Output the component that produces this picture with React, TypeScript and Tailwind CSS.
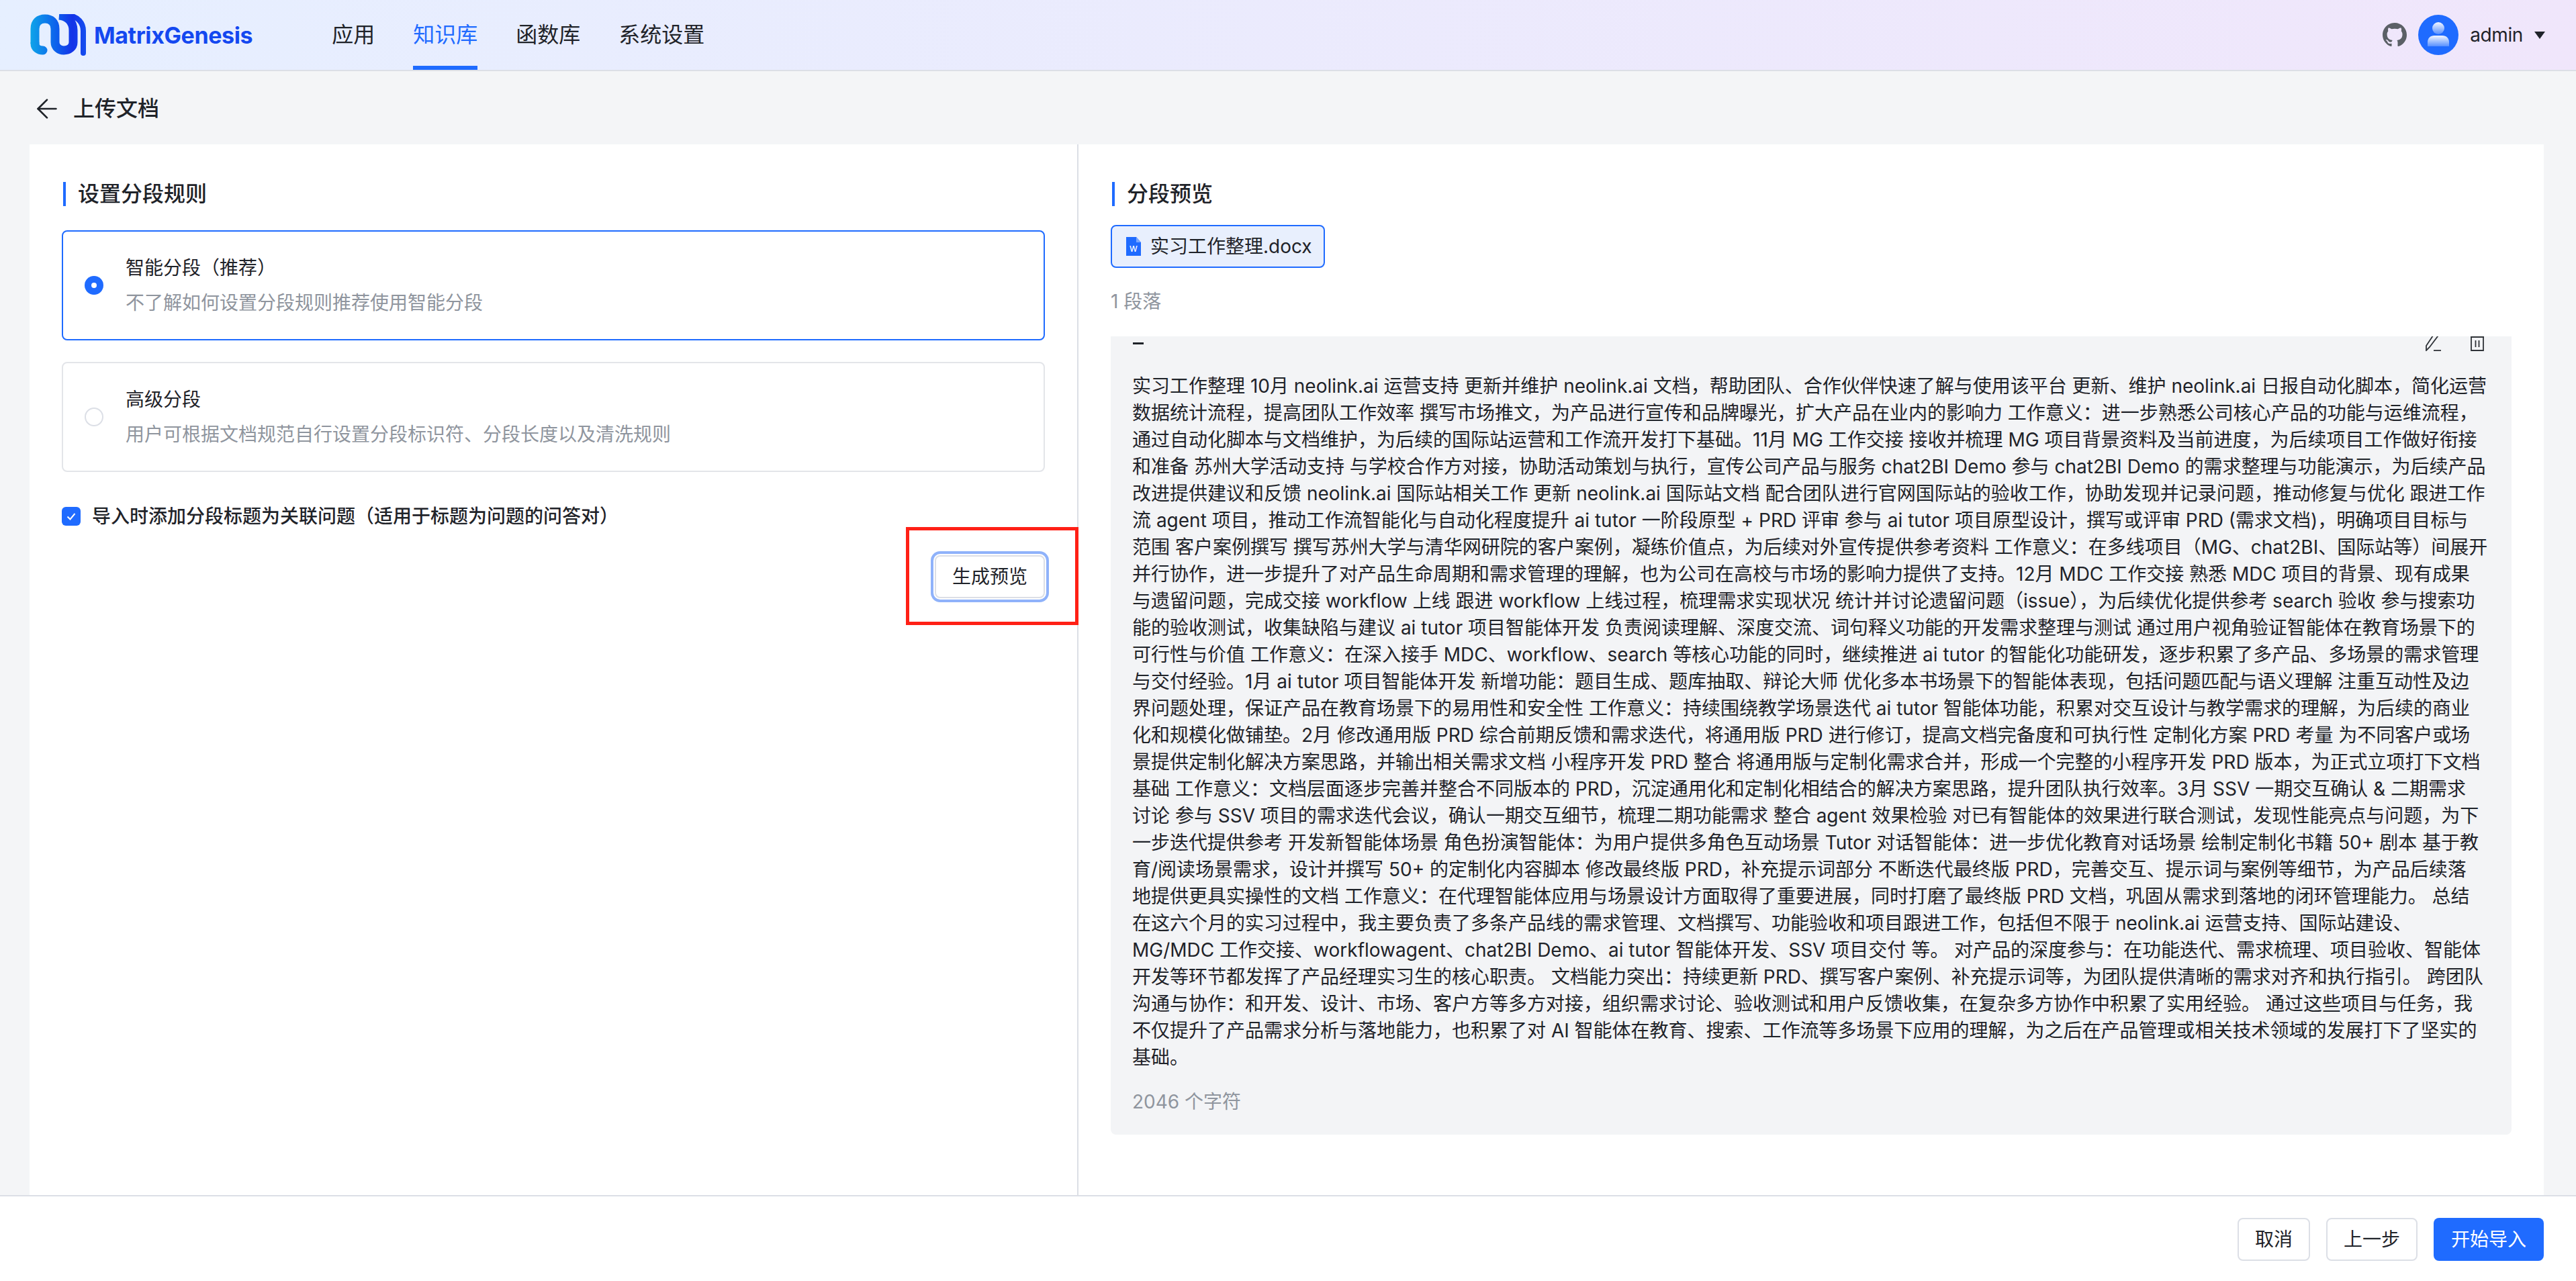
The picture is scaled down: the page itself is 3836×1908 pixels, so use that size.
import React from 'react';
import { ArrowLeft } from 'lucide-react';

const FONT = "font-['Inter','Noto_Sans_CJK_SC',sans-serif]";

const LINES = [
  '实习工作整理 10月 neolink.ai 运营支持 更新并维护 neolink.ai 文档，帮助团队、合作伙伴快速了解与使用该平台 更新、维护 neolink.ai 日报自动化脚本，简化运营',
  '数据统计流程，提高团队工作效率 撰写市场推文，为产品进行宣传和品牌曝光，扩大产品在业内的影响力 工作意义：进一步熟悉公司核心产品的功能与运维流程，',
  '通过自动化脚本与文档维护，为后续的国际站运营和工作流开发打下基础。11月 MG 工作交接 接收并梳理 MG 项目背景资料及当前进度，为后续项目工作做好衔接',
  '和准备 苏州大学活动支持 与学校合作方对接，协助活动策划与执行，宣传公司产品与服务 chat2BI Demo 参与 chat2BI Demo 的需求整理与功能演示，为后续产品',
  '改进提供建议和反馈 neolink.ai 国际站相关工作 更新 neolink.ai 国际站文档 配合团队进行官网国际站的验收工作，协助发现并记录问题，推动修复与优化 跟进工作',
  '流 agent 项目，推动工作流智能化与自动化程度提升 ai tutor 一阶段原型 + PRD 评审 参与 ai tutor 项目原型设计，撰写或评审 PRD (需求文档)，明确项目目标与',
  '范围 客户案例撰写 撰写苏州大学与清华网研院的客户案例，凝练价值点，为后续对外宣传提供参考资料 工作意义：在多线项目（MG、chat2BI、国际站等）间展开',
  '并行协作，进一步提升了对产品生命周期和需求管理的理解，也为公司在高校与市场的影响力提供了支持。12月 MDC 工作交接 熟悉 MDC 项目的背景、现有成果',
  '与遗留问题，完成交接 workflow 上线 跟进 workflow 上线过程，梳理需求实现状况 统计并讨论遗留问题（issue），为后续优化提供参考 search 验收 参与搜索功',
  '能的验收测试，收集缺陷与建议 ai tutor 项目智能体开发 负责阅读理解、深度交流、词句释义功能的开发需求整理与测试 通过用户视角验证智能体在教育场景下的',
  '可行性与价值 工作意义：在深入接手 MDC、workflow、search 等核心功能的同时，继续推进 ai tutor 的智能化功能研发，逐步积累了多产品、多场景的需求管理',
  '与交付经验。1月 ai tutor 项目智能体开发 新增功能：题目生成、题库抽取、辩论大师 优化多本书场景下的智能体表现，包括问题匹配与语义理解 注重互动性及边',
  '界问题处理，保证产品在教育场景下的易用性和安全性 工作意义：持续围绕教学场景迭代 ai tutor 智能体功能，积累对交互设计与教学需求的理解，为后续的商业',
  '化和规模化做铺垫。2月 修改通用版 PRD 综合前期反馈和需求迭代，将通用版 PRD 进行修订，提高文档完备度和可执行性 定制化方案 PRD 考量 为不同客户或场',
  '景提供定制化解决方案思路，并输出相关需求文档 小程序开发 PRD 整合 将通用版与定制化需求合并，形成一个完整的小程序开发 PRD 版本，为正式立项打下文档',
  '基础 工作意义：文档层面逐步完善并整合不同版本的 PRD，沉淀通用化和定制化相结合的解决方案思路，提升团队执行效率。3月 SSV 一期交互确认 & 二期需求',
  '讨论 参与 SSV 项目的需求迭代会议，确认一期交互细节，梳理二期功能需求 整合 agent 效果检验 对已有智能体的效果进行联合测试，发现性能亮点与问题，为下',
  '一步迭代提供参考 开发新智能体场景 角色扮演智能体：为用户提供多角色互动场景 Tutor 对话智能体：进一步优化教育对话场景 绘制定制化书籍 50+ 剧本 基于教',
  '育/阅读场景需求，设计并撰写 50+ 的定制化内容脚本 修改最终版 PRD，补充提示词部分 不断迭代最终版 PRD，完善交互、提示词与案例等细节，为产品后续落',
  '地提供更具实操性的文档 工作意义：在代理智能体应用与场景设计方面取得了重要进展，同时打磨了最终版 PRD 文档，巩固从需求到落地的闭环管理能力。 总结',
  '在这六个月的实习过程中，我主要负责了多条产品线的需求管理、文档撰写、功能验收和项目跟进工作，包括但不限于 neolink.ai 运营支持、国际站建设、',
  'MG/MDC 工作交接、workflowagent、chat2BI Demo、ai tutor 智能体开发、SSV 项目交付 等。 对产品的深度参与：在功能迭代、需求梳理、项目验收、智能体',
  '开发等环节都发挥了产品经理实习生的核心职责。 文档能力突出：持续更新 PRD、撰写客户案例、补充提示词等，为团队提供清晰的需求对齐和执行指引。 跨团队',
  '沟通与协作：和开发、设计、市场、客户方等多方对接，组织需求讨论、验收测试和用户反馈收集，在复杂多方协作中积累了实用经验。 通过这些项目与任务，我',
  '不仅提升了产品需求分析与落地能力，也积累了对 AI 智能体在教育、搜索、工作流等多场景下应用的理解，为之后在产品管理或相关技术领域的发展打下了坚实的',
  '基础。',
];

const Logo = () => (
  <svg width="84" height="63" viewBox="0 0 84 63" fill="none">
    <defs>
      <linearGradient id="lg" x1="0" y1="0" x2="84" y2="0" gradientUnits="userSpaceOnUse">
        <stop offset="0" stopColor="#0ea5e9" />
        <stop offset="0.5" stopColor="#0d5bec" />
        <stop offset="0.75" stopColor="#1433e8" />
        <stop offset="1" stopColor="#1450f0" />
      </linearGradient>
    </defs>
    {/* left U closes under the first arch */}
    <path d="M7 44 C7 50 12 54 19 54" stroke="url(#lg)" strokeWidth="13" strokeLinecap="round" />
    {/* main ribbon */}
    <path
      d="M7 44 V22 C7 12 13 7 22 7 C31 7 37 12 37 22 V42 C37 49 43 54 50 54 C58 54 64 49 64 42 V24 C64 12 56 3 43 2"
      stroke="url(#lg)"
      strokeWidth="13"
    />
    {/* outer tail */}
    <path d="M79 58 V25 C79 13 71 4 58 2" stroke="url(#lg)" strokeWidth="8" strokeLinecap="round" />
  </svg>
);

const WordIcon = () => (
  <svg width="22" height="28" viewBox="0 0 22 28">
    <path d="M0 0 H15 L22 8 V28 H0 Z" fill="#1f6bff" />
    <path d="M15 0 L22 8 H15 Z" fill="#7aa7ff" />
    <text x="11" y="22" fontSize="15" fill="#fff" textAnchor="middle" fontFamily="Inter, sans-serif">
      w
    </text>
  </svg>
);

const UserAvatar = () => (
  <svg width="60" height="60" viewBox="0 0 60 60">
    <defs>
      <linearGradient id="ua" x1="0" y1="0" x2="0" y2="1">
        <stop offset="0" stopColor="#ffffff" stopOpacity="0.95" />
        <stop offset="1" stopColor="#ffffff" stopOpacity="0.25" />
      </linearGradient>
    </defs>
    <circle cx="30" cy="30" r="30" fill="#1f6bff" />
    <circle cx="30" cy="20" r="9" fill="url(#ua)" />
    <path d="M14 47 V41 C14 35 18 31 24 31 H36 C42 31 46 35 46 41 V47 Z" fill="url(#ua)" />
  </svg>
);

const GitHubIcon = () => (
  <svg width="36" height="36" viewBox="0 0 16 16" fill="#5b6066">
    <path d="M8 0C3.58 0 0 3.58 0 8c0 3.54 2.29 6.53 5.47 7.59.4.07.55-.17.55-.38 0-.19-.01-.82-.01-1.49-2.01.37-2.53-.49-2.69-.94-.09-.23-.48-.94-.82-1.13-.28-.15-.68-.52-.01-.53.63-.01 1.08.58 1.23.82.72 1.21 1.87.87 2.33.66.07-.52.28-.87.51-1.07-1.78-.2-3.64-.89-3.64-3.95 0-.87.31-1.59.82-2.15-.08-.2-.36-1.02.08-2.12 0 0 .67-.21 2.2.82.64-.18 1.32-.27 2-.27s1.36.09 2 .27c1.53-1.04 2.2-.82 2.2-.82.44 1.1.16 1.92.08 2.12.51.56.82 1.27.82 2.15 0 3.07-1.87 3.75-3.65 3.95.29.25.54.73.54 1.48 0 1.07-.01 1.93-.01 2.2 0 .21.15.46.55.38A8.01 8.01 0 0 0 16 8c0-4.42-3.58-8-8-8z" />
  </svg>
);

const SectionTitle = ({ children }: { children: React.ReactNode }) => (
  <div className="ml-[2px] flex h-9 items-center border-l-4 border-[#1f6bff] pl-[18px] text-[32px] leading-9 font-medium text-[#1f2329]">
    {children}
  </div>
);

const RuleCard = ({ active, title, desc }: { active?: boolean; title: string; desc: string }) => (
  <div
    className={`flex h-[164px] items-center rounded-lg border-2 pl-[32px] ${
      active ? 'border-[#1f6bff]' : 'border-[#e3e5e9]'
    }`}
  >
    {active ? (
      <span className="flex h-7 w-7 items-center justify-center rounded-full bg-[#1f6bff]">
        <span className="h-2 w-2 rounded-full bg-white" />
      </span>
    ) : (
      <span className="h-7 w-7 rounded-full border-2 border-[#dcdfe6]" />
    )}
    <div className="ml-[33px]">
      <div className="text-[28px] leading-10 text-[#1f2329]">{title}</div>
      <div className="mt-3 text-[28px] leading-10 text-[#8f959e]">{desc}</div>
    </div>
  </div>
);

const FooterButton = ({ children, primary }: { children: React.ReactNode; primary?: boolean }) => (
  <button
    className={`h-16 rounded-lg text-[28px] ${
      primary ? 'bg-[#1f6bff] px-[26px] text-white' : 'border-2 border-[#dcdfe6] bg-white px-6 text-[#1f2329]'
    }`}
  >
    {children}
  </button>
);

export default function App() {
  return (
    <div className={`flex h-[1908px] w-[3836px] flex-col overflow-hidden bg-[#f4f5f7] ${FONT}`}>
      {/* top nav */}
      <header className="flex h-[106px] shrink-0 items-center border-b-2 border-[#dcdfe6] bg-gradient-to-r from-[#e6efff] to-[#f0e6fb] pr-[46px] pl-[45px]">
        <Logo />
        <span className="ml-[11px] text-[34px] font-bold tracking-[-0.4px] text-[#1448f0]">MatrixGenesis</span>
        <nav className="ml-[118px] flex h-full gap-[57px] text-[32px] text-[#1f2329]">
          <a className="flex items-center">应用</a>
          <a className="flex items-center border-b-[6px] border-[#1f6bff] pt-[6px] text-[#1f6bff]">知识库</a>
          <a className="flex items-center">函数库</a>
          <a className="flex items-center">系统设置</a>
        </nav>
        <div className="ml-auto flex items-center">
          <GitHubIcon />
          <span className="ml-[17px]">
            <UserAvatar />
          </span>
          <span className="ml-[17px] text-[28px] tracking-[-0.4px] text-[#1f2329]">admin</span>
          <span className="ml-[17px] h-0 w-0 border-x-8 border-t-[11px] border-x-transparent border-t-[#1f2329]" />
        </div>
      </header>

      {/* page title */}
      <div className="flex h-[109px] shrink-0 items-center pt-[3px] pl-[56px] text-[32px] font-medium text-[#1f2329]">
        <ArrowLeft size={46} strokeWidth={1.4} className="-ml-[9px]" />
        <span className="ml-[16px]">上传文档</span>
      </div>

      {/* panels */}
      <div className="mr-[48px] ml-[44px] flex min-h-0 flex-1 bg-white">
        <section className="relative w-[1562px] shrink-0 border-r-2 border-[#dcdfe6] px-[48px] pt-[56px]">
          <SectionTitle>设置分段规则</SectionTitle>
          <div className="mt-9 flex flex-col gap-8">
            <RuleCard active title="智能分段（推荐）" desc="不了解如何设置分段规则推荐使用智能分段" />
            <RuleCard title="高级分段" desc="用户可根据文档规范自行设置分段标识符、分段长度以及清洗规则" />
          </div>
          <div className="mt-[46px] flex items-center">
            <span className="flex h-7 w-7 items-center justify-center rounded-md bg-[#1f6bff]">
              <svg width="18" height="18" viewBox="0 0 18 18" fill="none">
                <path d="M3.5 9.5 L7.5 13.5 L14.5 5" stroke="#fff" strokeWidth="2" />
              </svg>
            </span>
            <span className="ml-[17px] text-[28px] leading-10 font-medium text-[#1f2329]">
              导入时添加分段标题为关联问题（适用于标题为问题的问答对）
            </span>
          </div>
          <div className="mt-[38px] flex justify-end">
            <button className="h-16 w-[164px] rounded-lg border-2 border-[#dcdfe6] bg-white text-[28px] text-[#1f2329] shadow-[0_0_0_2px_#fff,0_0_0_6px_#8fb2fa]">
              生成预览
            </button>
          </div>
          {/* red annotation box from the screenshot */}
          <div className="absolute top-[570px] left-[1305px] h-[146px] w-[257px] border-[5px] border-[#ff2016]" />
        </section>

        <section className="flex min-w-0 flex-1 flex-col px-[48px] pt-[56px]">
          <SectionTitle>分段预览</SectionTitle>
          <div className="mt-7 flex h-16 w-[319px] items-center rounded-lg border-2 border-[#1f6bff] bg-[#e8effd] pl-[21px] text-[28px] text-[#1f2329]">
            <WordIcon />
            <span className="ml-[14px]">实习工作整理.docx</span>
          </div>
          <div className="mt-[30px] text-[28px] leading-10 text-[#8f959e]">1 段落</div>
          <div className="mt-[32px] h-[1189px] overflow-hidden rounded-b-lg bg-[#f3f4f6] px-8">
            <div className="relative h-[54px]">
              <div className="absolute top-[9px] left-[1px] h-[3px] w-[16px] bg-[#1f2329]" />
              <svg
                className="absolute top-0 right-[72px]"
                width="24"
                height="22"
                viewBox="0 0 24 22"
                fill="none"
                stroke="#2f3338"
                strokeWidth="1.8"
              >
                <path d="M13 -4 L18 0 L6 16 L1 21 L1 14 Z" />
                <path d="M12 21 H23" />
              </svg>
              <svg
                className="absolute top-0 right-[8px]"
                width="22"
                height="22"
                viewBox="0 0 22 22"
                fill="none"
                stroke="#2f3338"
                strokeWidth="1.8"
              >
                <path d="M1 1 H21" />
                <path d="M2 1 V21 H20 V1" />
                <path d="M8.5 6 V16 M13.5 6 V16" />
              </svg>
            </div>
            {LINES.map((line, i) => (
              <div key={i} className="text-[28px] leading-10 whitespace-nowrap text-[#1f2329]">
                {line}
              </div>
            ))}
            <div className="mt-[26px] text-[28px] leading-10 text-[#8f959e]">2046 个字符</div>
          </div>
        </section>
      </div>

      {/* footer actions */}
      <footer className="flex h-[128px] shrink-0 items-start justify-end gap-6 border-t-2 border-[#dcdfe6] bg-white pt-[32px] pr-[48px]">
        <FooterButton>取消</FooterButton>
        <FooterButton>上一步</FooterButton>
        <FooterButton primary>开始导入</FooterButton>
      </footer>
    </div>
  );
}
